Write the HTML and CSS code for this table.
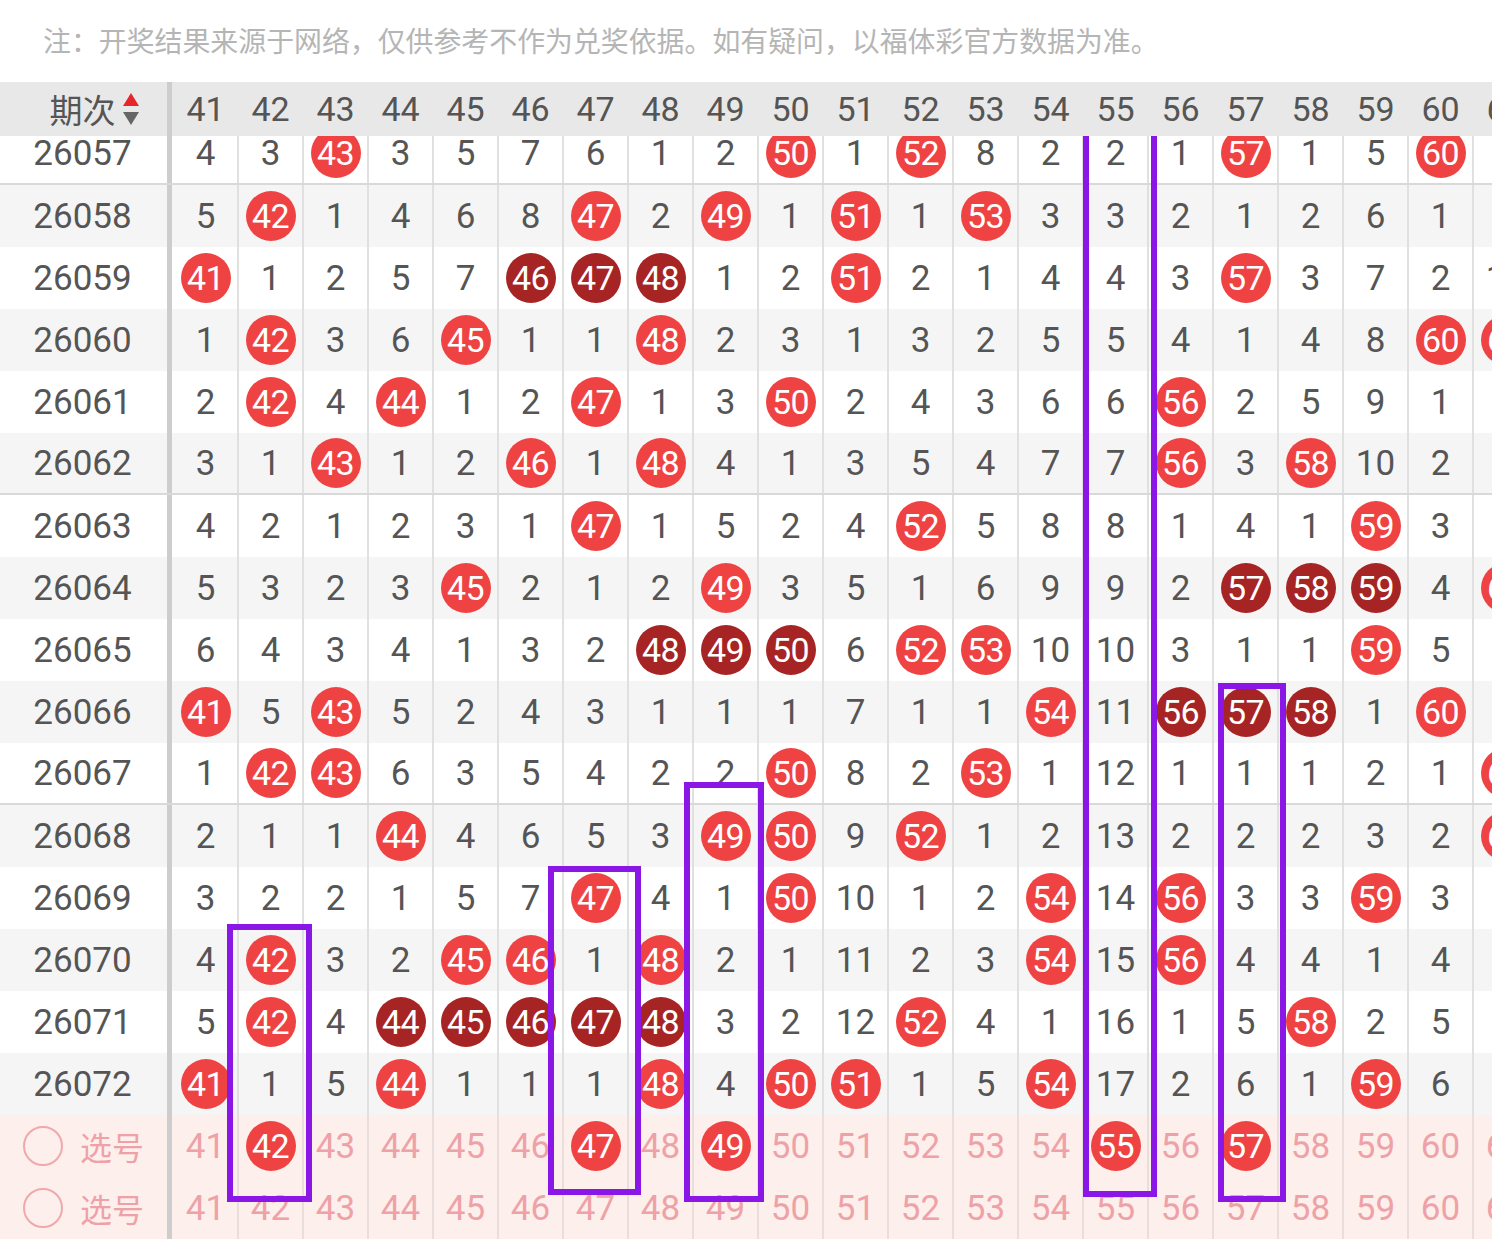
FILE: index.html
```html
<!DOCTYPE html>
<html lang="zh-CN">
<head>
<meta charset="utf-8">
<title>走势图</title>
<link rel="stylesheet" href="styles.css">
</head>
<body>
<div class="note">注：开奖结果来源于网络，仅供参考不作为兑奖依据。如有疑问，以福体彩官方数据为准。</div>
<div class="board">
  <div class="head">
    <div class="lab hlab"><span>期次</span><svg class="sort" width="18" height="34" viewBox="0 0 18 34"><polygon points="9,1 17,14 1,14" fill="#e8252a"/><polygon points="1,20 17,20 9,33" fill="#666"/></svg></div>
    <div class="c">41</div><div class="c">42</div><div class="c">43</div><div class="c">44</div><div class="c">45</div><div class="c">46</div><div class="c">47</div><div class="c">48</div><div class="c">49</div><div class="c">50</div><div class="c">51</div><div class="c">52</div><div class="c">53</div><div class="c">54</div><div class="c">55</div><div class="c">56</div><div class="c">57</div><div class="c">58</div><div class="c">59</div><div class="c">60</div><div class="c">61</div>
  </div>
  <div class="rows">
    <div class="row sep"><div class="lab">26057</div><div class="c">4</div><div class="c">3</div><div class="c"><span class="ball">43</span></div><div class="c">3</div><div class="c">5</div><div class="c">7</div><div class="c">6</div><div class="c">1</div><div class="c">2</div><div class="c"><span class="ball">50</span></div><div class="c">1</div><div class="c"><span class="ball">52</span></div><div class="c">8</div><div class="c">2</div><div class="c">2</div><div class="c">1</div><div class="c"><span class="ball">57</span></div><div class="c">1</div><div class="c">5</div><div class="c"><span class="ball">60</span></div><div class="c">3</div></div>
    <div class="row alt"><div class="lab">26058</div><div class="c">5</div><div class="c"><span class="ball">42</span></div><div class="c">1</div><div class="c">4</div><div class="c">6</div><div class="c">8</div><div class="c"><span class="ball">47</span></div><div class="c">2</div><div class="c"><span class="ball">49</span></div><div class="c">1</div><div class="c"><span class="ball">51</span></div><div class="c">1</div><div class="c"><span class="ball">53</span></div><div class="c">3</div><div class="c">3</div><div class="c">2</div><div class="c">1</div><div class="c">2</div><div class="c">6</div><div class="c">1</div><div class="c">2</div></div>
    <div class="row"><div class="lab">26059</div><div class="c"><span class="ball">41</span></div><div class="c">1</div><div class="c">2</div><div class="c">5</div><div class="c">7</div><div class="c"><span class="ball dk">46</span></div><div class="c"><span class="ball dk">47</span></div><div class="c"><span class="ball dk">48</span></div><div class="c">1</div><div class="c">2</div><div class="c"><span class="ball">51</span></div><div class="c">2</div><div class="c">1</div><div class="c">4</div><div class="c">4</div><div class="c">3</div><div class="c"><span class="ball">57</span></div><div class="c">3</div><div class="c">7</div><div class="c">2</div><div class="c">10</div></div>
    <div class="row alt"><div class="lab">26060</div><div class="c">1</div><div class="c"><span class="ball">42</span></div><div class="c">3</div><div class="c">6</div><div class="c"><span class="ball">45</span></div><div class="c">1</div><div class="c">1</div><div class="c"><span class="ball">48</span></div><div class="c">2</div><div class="c">3</div><div class="c">1</div><div class="c">3</div><div class="c">2</div><div class="c">5</div><div class="c">5</div><div class="c">4</div><div class="c">1</div><div class="c">4</div><div class="c">8</div><div class="c"><span class="ball">60</span></div><div class="c"><span class="ball">61</span></div></div>
    <div class="row"><div class="lab">26061</div><div class="c">2</div><div class="c"><span class="ball">42</span></div><div class="c">4</div><div class="c"><span class="ball">44</span></div><div class="c">1</div><div class="c">2</div><div class="c"><span class="ball">47</span></div><div class="c">1</div><div class="c">3</div><div class="c"><span class="ball">50</span></div><div class="c">2</div><div class="c">4</div><div class="c">3</div><div class="c">6</div><div class="c">6</div><div class="c"><span class="ball">56</span></div><div class="c">2</div><div class="c">5</div><div class="c">9</div><div class="c">1</div><div class="c">1</div></div>
    <div class="row alt sep"><div class="lab">26062</div><div class="c">3</div><div class="c">1</div><div class="c"><span class="ball">43</span></div><div class="c">1</div><div class="c">2</div><div class="c"><span class="ball">46</span></div><div class="c">1</div><div class="c"><span class="ball">48</span></div><div class="c">4</div><div class="c">1</div><div class="c">3</div><div class="c">5</div><div class="c">4</div><div class="c">7</div><div class="c">7</div><div class="c"><span class="ball">56</span></div><div class="c">3</div><div class="c"><span class="ball">58</span></div><div class="c">10</div><div class="c">2</div><div class="c">2</div></div>
    <div class="row"><div class="lab">26063</div><div class="c">4</div><div class="c">2</div><div class="c">1</div><div class="c">2</div><div class="c">3</div><div class="c">1</div><div class="c"><span class="ball">47</span></div><div class="c">1</div><div class="c">5</div><div class="c">2</div><div class="c">4</div><div class="c"><span class="ball">52</span></div><div class="c">5</div><div class="c">8</div><div class="c">8</div><div class="c">1</div><div class="c">4</div><div class="c">1</div><div class="c"><span class="ball">59</span></div><div class="c">3</div><div class="c">3</div></div>
    <div class="row alt"><div class="lab">26064</div><div class="c">5</div><div class="c">3</div><div class="c">2</div><div class="c">3</div><div class="c"><span class="ball">45</span></div><div class="c">2</div><div class="c">1</div><div class="c">2</div><div class="c"><span class="ball">49</span></div><div class="c">3</div><div class="c">5</div><div class="c">1</div><div class="c">6</div><div class="c">9</div><div class="c">9</div><div class="c">2</div><div class="c"><span class="ball dk">57</span></div><div class="c"><span class="ball dk">58</span></div><div class="c"><span class="ball dk">59</span></div><div class="c">4</div><div class="c"><span class="ball">61</span></div></div>
    <div class="row"><div class="lab">26065</div><div class="c">6</div><div class="c">4</div><div class="c">3</div><div class="c">4</div><div class="c">1</div><div class="c">3</div><div class="c">2</div><div class="c"><span class="ball dk">48</span></div><div class="c"><span class="ball dk">49</span></div><div class="c"><span class="ball dk">50</span></div><div class="c">6</div><div class="c"><span class="ball">52</span></div><div class="c"><span class="ball">53</span></div><div class="c">10</div><div class="c">10</div><div class="c">3</div><div class="c">1</div><div class="c">1</div><div class="c"><span class="ball">59</span></div><div class="c">5</div><div class="c">1</div></div>
    <div class="row alt"><div class="lab">26066</div><div class="c"><span class="ball">41</span></div><div class="c">5</div><div class="c"><span class="ball">43</span></div><div class="c">5</div><div class="c">2</div><div class="c">4</div><div class="c">3</div><div class="c">1</div><div class="c">1</div><div class="c">1</div><div class="c">7</div><div class="c">1</div><div class="c">1</div><div class="c"><span class="ball">54</span></div><div class="c">11</div><div class="c"><span class="ball dk">56</span></div><div class="c"><span class="ball dk">57</span></div><div class="c"><span class="ball dk">58</span></div><div class="c">1</div><div class="c"><span class="ball">60</span></div><div class="c">2</div></div>
    <div class="row sep"><div class="lab">26067</div><div class="c">1</div><div class="c"><span class="ball">42</span></div><div class="c"><span class="ball">43</span></div><div class="c">6</div><div class="c">3</div><div class="c">5</div><div class="c">4</div><div class="c">2</div><div class="c">2</div><div class="c"><span class="ball">50</span></div><div class="c">8</div><div class="c">2</div><div class="c"><span class="ball">53</span></div><div class="c">1</div><div class="c">12</div><div class="c">1</div><div class="c">1</div><div class="c">1</div><div class="c">2</div><div class="c">1</div><div class="c"><span class="ball">61</span></div></div>
    <div class="row alt"><div class="lab">26068</div><div class="c">2</div><div class="c">1</div><div class="c">1</div><div class="c"><span class="ball">44</span></div><div class="c">4</div><div class="c">6</div><div class="c">5</div><div class="c">3</div><div class="c"><span class="ball">49</span></div><div class="c"><span class="ball">50</span></div><div class="c">9</div><div class="c"><span class="ball">52</span></div><div class="c">1</div><div class="c">2</div><div class="c">13</div><div class="c">2</div><div class="c">2</div><div class="c">2</div><div class="c">3</div><div class="c">2</div><div class="c"><span class="ball">61</span></div></div>
    <div class="row"><div class="lab">26069</div><div class="c">3</div><div class="c">2</div><div class="c">2</div><div class="c">1</div><div class="c">5</div><div class="c">7</div><div class="c"><span class="ball">47</span></div><div class="c">4</div><div class="c">1</div><div class="c"><span class="ball">50</span></div><div class="c">10</div><div class="c">1</div><div class="c">2</div><div class="c"><span class="ball">54</span></div><div class="c">14</div><div class="c"><span class="ball">56</span></div><div class="c">3</div><div class="c">3</div><div class="c"><span class="ball">59</span></div><div class="c">3</div><div class="c">1</div></div>
    <div class="row alt"><div class="lab">26070</div><div class="c">4</div><div class="c"><span class="ball">42</span></div><div class="c">3</div><div class="c">2</div><div class="c"><span class="ball">45</span></div><div class="c"><span class="ball">46</span></div><div class="c">1</div><div class="c"><span class="ball">48</span></div><div class="c">2</div><div class="c">1</div><div class="c">11</div><div class="c">2</div><div class="c">3</div><div class="c"><span class="ball">54</span></div><div class="c">15</div><div class="c"><span class="ball">56</span></div><div class="c">4</div><div class="c">4</div><div class="c">1</div><div class="c">4</div><div class="c">2</div></div>
    <div class="row"><div class="lab">26071</div><div class="c">5</div><div class="c"><span class="ball">42</span></div><div class="c">4</div><div class="c"><span class="ball dk">44</span></div><div class="c"><span class="ball dk">45</span></div><div class="c"><span class="ball dk">46</span></div><div class="c"><span class="ball dk">47</span></div><div class="c"><span class="ball dk">48</span></div><div class="c">3</div><div class="c">2</div><div class="c">12</div><div class="c"><span class="ball">52</span></div><div class="c">4</div><div class="c">1</div><div class="c">16</div><div class="c">1</div><div class="c">5</div><div class="c"><span class="ball">58</span></div><div class="c">2</div><div class="c">5</div><div class="c">3</div></div>
    <div class="row alt"><div class="lab">26072</div><div class="c"><span class="ball">41</span></div><div class="c">1</div><div class="c">5</div><div class="c"><span class="ball">44</span></div><div class="c">1</div><div class="c">1</div><div class="c">1</div><div class="c"><span class="ball">48</span></div><div class="c">4</div><div class="c"><span class="ball">50</span></div><div class="c"><span class="ball">51</span></div><div class="c">1</div><div class="c">5</div><div class="c"><span class="ball">54</span></div><div class="c">17</div><div class="c">2</div><div class="c">6</div><div class="c">1</div><div class="c"><span class="ball">59</span></div><div class="c">6</div><div class="c">4</div></div>
    <div class="row pick"><div class="lab sel"><span class="ring"></span><span>选号</span></div><div class="c">41</div><div class="c"><span class="ball">42</span></div><div class="c">43</div><div class="c">44</div><div class="c">45</div><div class="c">46</div><div class="c"><span class="ball">47</span></div><div class="c">48</div><div class="c"><span class="ball">49</span></div><div class="c">50</div><div class="c">51</div><div class="c">52</div><div class="c">53</div><div class="c">54</div><div class="c"><span class="ball">55</span></div><div class="c">56</div><div class="c"><span class="ball">57</span></div><div class="c">58</div><div class="c">59</div><div class="c">60</div><div class="c">61</div></div>
    <div class="row pick"><div class="lab sel"><span class="ring"></span><span>选号</span></div><div class="c">41</div><div class="c">42</div><div class="c">43</div><div class="c">44</div><div class="c">45</div><div class="c">46</div><div class="c">47</div><div class="c">48</div><div class="c">49</div><div class="c">50</div><div class="c">51</div><div class="c">52</div><div class="c">53</div><div class="c">54</div><div class="c">55</div><div class="c">56</div><div class="c">57</div><div class="c">58</div><div class="c">59</div><div class="c">60</div><div class="c">61</div></div>
  </div>
  <div class="mark m42"></div>
  <div class="mark m47"></div>
  <div class="mark m49"></div>
  <div class="mark m55"></div>
  <div class="mark m57"></div>
</div>
</body>
</html>
```
FILE: styles.css
```css
* { box-sizing: border-box; margin: 0; padding: 0; }
html, body { width: 1492px; height: 1240px; overflow: hidden; }
body {
  background: #fff;
  font-family: Roboto, "Noto Sans CJK SC", sans-serif;
  color: #555;
}
.note {
  height: 82px;
  padding-left: 43px;
  font-family: "Noto Sans CJK SC", sans-serif;
  font-size: 27.9px;
  line-height: 80px;
  color: #b5b5b5;
  white-space: nowrap;
}
.board {
  position: relative;
  height: 1158px;
  overflow: hidden;
}
.head {
  position: relative;
  z-index: 3;
  display: flex;
  height: 54px;
  background: #e8e8e8;
}
.head .c { border-right-color: transparent; font-size: 34px; }
.rows { margin-top: -13px; }
.row {
  display: flex;
  height: 62px;
  background: #fff;
}
.row.alt { background: #f5f5f5; }
.row.sep { border-bottom: 2px solid #d9d9d9; }
.row.pick { background: #fdefec; }
.lab {
  flex: 0 0 172px;
  border-right: 5px solid #cdcdcd;
  display: flex;
  align-items: center;
  justify-content: center;
  font-size: 35px;
  padding-right: 2px;
}
.hlab { font-family: "Noto Sans CJK SC", sans-serif; font-size: 33px; padding-left: 24px; gap: 6px; }
.hlab span { line-height: 1; }
.sort { display: block; }
.c {
  flex: 0 0 65px;
  border-right: 2px solid #e0e0e0;
  display: flex;
  align-items: center;
  justify-content: center;
  font-size: 35px;
  white-space: nowrap;
}
.lab + .c { flex-basis: 67px; padding-left: 2px; }
.pick .c { color: #eea2a7; border-right-color: #eadedd; }
.ball {
  flex: 0 0 50px;
  width: 50px;
  height: 50px;
  border-radius: 50%;
  background: #ef4343;
  color: #fff;
  display: flex;
  align-items: center;
  justify-content: center;
  font-size: 34px;
  letter-spacing: -0.5px;
}
.pick .c .ball { color: #fff; }
.ball.dk { background: #a72424; }
.sel {
  justify-content: flex-start;
  padding-left: 23px;
  gap: 17px;
  color: #eea2a7;
  font-family: "Noto Sans CJK SC", sans-serif;
  font-size: 32px;
}
.ring {
  width: 40px;
  height: 40px;
  border: 2px solid #f0a8ac;
  border-radius: 50%;
}
.mark {
  position: absolute;
  z-index: 2;
  border: 6px solid #8b17e6;
}
.m42 { left: 227px; top: 842px; width: 85px; height: 278px; }
.m47 { left: 548px; top: 784px; width: 93px; height: 329px; }
.m49 { left: 684px; top: 700px; width: 80px; height: 420px; }
.m55 { left: 1083px; top: 40px; width: 74px; height: 1075px; }
.m57 { left: 1218px; top: 601px; width: 68px; height: 519px; }
```
